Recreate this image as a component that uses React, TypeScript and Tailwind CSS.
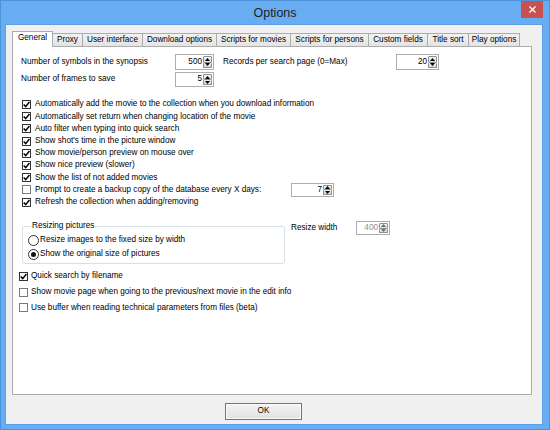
import React from "react";

function Check({ checked }: { checked: boolean }) {
  return (
    <span
      className={
        "w-[9px] h-[9px] border bg-white flex items-center justify-center shrink-0 " +
        (checked ? "border-[#333333]" : "border-[#7a7a7a]")
      }
    >
      {checked && (
        <svg width="7" height="7" viewBox="0 0 7 7">
          <path d="M0.7 3.4 L2.7 5.6 L6.4 1" stroke="#000" strokeWidth="1.5" fill="none" />
        </svg>
      )}
    </span>
  );
}

function Radio({ on }: { on: boolean }) {
  return (
    <span className="w-[11px] h-[11px] rounded-full border border-[#333333] bg-white flex items-center justify-center shrink-0">
      {on && <span className="w-[5px] h-[5px] rounded-full bg-[#111]" />}
    </span>
  );
}

function Spin({ value, cls, disabled }: { value: string; cls: string; disabled?: boolean }) {
  return (
    <div className={"flex border border-[#abadb3] bg-white shrink-0 " + cls}>
      <span
        className={
          "flex-1 flex items-center justify-end pr-[1px] " + (disabled ? "text-[#8f8f8f]" : "text-black")
        }
      >
        {value}
      </span>
      <div className="flex flex-col w-[9px] my-[1px] mr-[1px]">
        <div className="flex-1 border border-[#8e8f8f] rounded-[1px] bg-linear-to-b from-[#f3f3f3] to-[#dedede] flex items-center justify-center">
          <svg width="5" height="3" viewBox="0 0 5 3">
            <polygon points="2.5,0 5,3 0,3" fill={disabled ? "#6d6d6d" : "#000"} />
          </svg>
        </div>
        <div className="flex-1 border border-t-0 border-[#8e8f8f] rounded-[1px] bg-linear-to-b from-[#ececec] to-[#d8d8d8] flex items-center justify-center">
          <svg width="5" height="3" viewBox="0 0 5 3">
            <polygon points="0,0 5,0 2.5,3" fill={disabled ? "#6d6d6d" : "#000"} />
          </svg>
        </div>
      </div>
    </div>
  );
}

const tabs: { label: string; cls: string }[] = [
  { label: "Proxy", cls: "w-[31px]" },
  { label: "User interface", cls: "w-[61px]" },
  { label: "Download options", cls: "w-[75px]" },
  { label: "Scripts for movies", cls: "w-[75px]" },
  { label: "Scripts for persons", cls: "w-[79px]" },
  { label: "Custom fields", cls: "w-[60px]" },
  { label: "Title sort", cls: "w-[42px]" },
  { label: "Play options", cls: "w-[52px]" },
];

const checks: [string, boolean][] = [
  ["Automatically add the movie to the collection when you download information", true],
  ["Automatically set return when changing location of the movie", true],
  ["Auto filter when typing into quick search", true],
  ["Show shot's time in the picture window", true],
  ["Show movie/person preview on mouse over", true],
  ["Show nice preview (slower)", true],
  ["Show the list of not added movies", true],
];

export default function App() {
  return (
    <div className="w-[550px] h-[430px] bg-[#68adf2] border border-[#4d92dc] flex flex-col font-['Liberation_Sans',Arial,sans-serif] text-[8.2px] text-black overflow-hidden">
      <div className="relative h-[23px] flex items-center justify-center shrink-0">
        <span className="text-[12.5px] text-[#1e1e1e] leading-none mt-[1px]">Options</span>
        <div className="absolute right-[6px] -top-[1px] w-[22px] h-[18px] bg-[#c75050] flex items-center justify-center">
          <svg width="7" height="7" viewBox="0 0 7 7">
            <path d="M0.5 0.5 L6.5 6.5 M6.5 0.5 L0.5 6.5" stroke="#fff" strokeWidth="1.3" />
          </svg>
        </div>
      </div>

      <div className="ml-[4px] w-[538px] h-[401px] bg-[#f0f0f0] border border-[#5c9fe6] flex flex-col pl-[6px] pt-[5px]">
        <div className="flex items-end h-[16px]">
          <div className="w-[41px] h-[16px] -mb-[1px] z-10 bg-white border border-b-0 border-[#acacac] flex items-center justify-center pb-[2px]">
            General
          </div>
          {tabs.map((t) => (
            <div
              key={t.label}
              className={
                "h-[13px] -ml-[1px] border border-b-0 border-[#acacac] bg-linear-to-b from-[#f2f2f2] to-[#e4e4e4] flex items-center justify-center " +
                t.cls
              }
            >
              {t.label}
            </div>
          ))}
        </div>

        <div className="w-[520px] h-[349px] bg-white border border-[#acacac] pl-[8px] pt-[7px]">
          <div className="flex items-center h-[16px]">
            <span className="w-[154px]">Number of symbols in the synopsis</span>
            <Spin value="500" cls="w-[39px] h-[16px]" />
            <span className="ml-[9px] w-[173px]">Records per search page (0=Max)</span>
            <Spin value="20" cls="w-[43px] h-[16px]" />
          </div>
          <div className="flex items-center h-[15px] mt-[2px]">
            <span className="w-[154px]">Number of frames to save</span>
            <Spin value="5" cls="w-[39px] h-[15px]" />
          </div>

          <div className="mt-[11.5px] ml-[1px] flex flex-col">
            {checks.map(([label, on]) => (
              <div key={label} className="flex items-center h-[12.2px] gap-[4px]">
                <Check checked={on} />
                <span>{label}</span>
              </div>
            ))}
            <div className="flex items-center h-[12.2px] gap-[4px]">
              <Check checked={false} />
              <span className="w-[252px]">Prompt to create a backup copy of the database every X days:</span>
              <Spin value="7" cls="w-[43px] h-[14px]" />
            </div>
            <div className="flex items-center h-[12.2px] gap-[4px]">
              <Check checked={true} />
              <span>Refresh the collection when adding/removing</span>
            </div>
          </div>

          <div className="flex items-start mt-[13px]">
            <fieldset className="ml-[1px] w-[263px] border border-[#d5dfe5] rounded-[3px] pl-[5px] pb-[3px]">
              <legend className="ml-[3px] px-[1px] leading-[10px]">Resizing pictures</legend>
              <div className="flex items-center h-[12px] mt-[3px] gap-[1px]">
                <Radio on={false} />
                <span>Resize images to the fixed size by width</span>
              </div>
              <div className="flex items-center h-[12px] mt-[2px] gap-[1px]">
                <Radio on={true} />
                <span>Show the original size of pictures</span>
              </div>
            </fieldset>
            <div className="flex items-center h-[14px] ml-[6px]">
              <span className="w-[65px]">Resize width</span>
              <Spin value="400" cls="w-[34px] h-[14px]" disabled />
            </div>
          </div>

          <div className="flex flex-col -ml-[2px] mt-[6px]">
            <div className="flex items-center h-[12px] gap-[3px]">
              <Check checked={true} />
              <span>Quick search by filename</span>
            </div>
            <div className="flex items-center h-[12px] gap-[3px] mt-[4px]">
              <Check checked={false} />
              <span>Show movie page when going to the previous/next movie in the edit info</span>
            </div>
            <div className="flex items-center h-[12px] gap-[3px] mt-[3.5px]">
              <Check checked={false} />
              <span>Use buffer when reading technical parameters from files (beta)</span>
            </div>
          </div>
        </div>

        <div className="flex mt-[8px]">
          <button className="ml-[213px] w-[77px] h-[17px] border border-[#3c7fd1] bg-linear-to-b from-[#f4f4f4] to-[#e1e1e1] shadow-[inset_0_0_0_1px_#fbfbfb] flex items-center justify-center text-[8.2px]">
            OK
          </button>
        </div>
      </div>
    </div>
  );
}
